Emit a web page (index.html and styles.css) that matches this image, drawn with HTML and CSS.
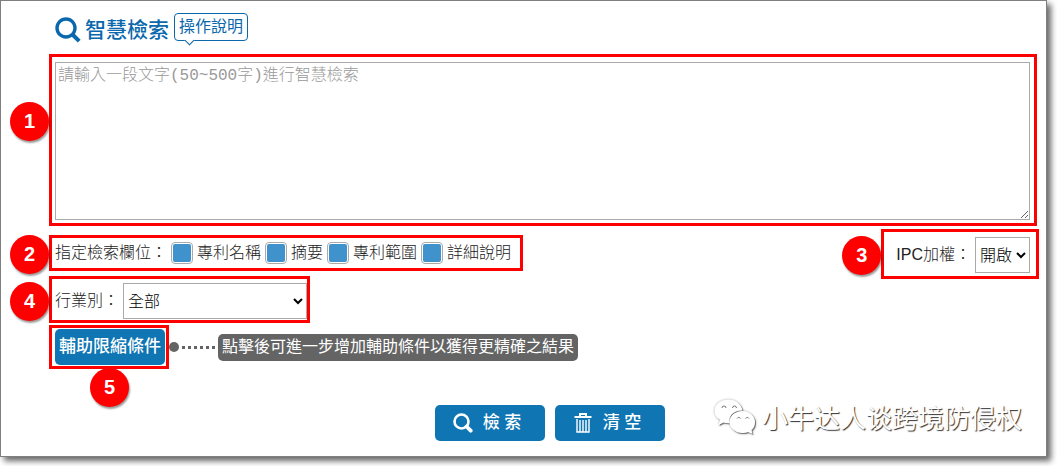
FILE: index.html
```html
<!DOCTYPE html>
<html lang="zh-Hant">
<head>
    <meta charset="UTF-8">
    <meta name="viewport" content="width=device-width, initial-scale=1.0">
    <title>智慧檢索</title>
    <link rel="stylesheet" href="styles.css">
</head>
<body>
    <form class="panel">
        <header class="header">
            <svg class="title-icon" viewBox="0 0 26 26" aria-hidden="true">
                <circle cx="11" cy="11" r="9" fill="none" stroke="currentColor" stroke-width="3.4"/>
                <path d="M17 17l7.2 7.2" stroke="currentColor" stroke-width="4"/>
            </svg>
            <h1 class="title" id="title">智慧檢索</h1>
            <a class="help" href="#help">操作說明</a>
        </header>

        <div class="mark mark-query">
            <textarea class="query" aria-labelledby="title" placeholder="請輸入一段文字(50~500字)進行智慧檢索"></textarea>
            <span class="badge badge-side">1</span>
        </div>

        <div class="options">
            <div class="options-left">
                <div class="mark mark-fields" role="group" aria-labelledby="fields-label">
                    <span class="fields-label" id="fields-label">指定檢索欄位：</span>
                    <label class="field"><input type="checkbox" class="check" checked>專利名稱</label>
                    <label class="field"><input type="checkbox" class="check" checked>摘要</label>
                    <label class="field"><input type="checkbox" class="check" checked>專利範圍</label>
                    <label class="field"><input type="checkbox" class="check" checked>詳細說明</label>
                    <span class="badge badge-side">2</span>
                </div>

                <div class="mark mark-industry">
                    <label for="industry">行業別：</label>
                    <select class="select select-wide" id="industry">
                        <option>全部</option>
                    </select>
                    <span class="badge badge-side">4</span>
                </div>

                <div class="limit-row">
                    <div class="mark mark-limit">
                        <button type="button" class="btn">輔助限縮條件</button>
                        <span class="badge badge-below">5</span>
                    </div>
                    <span class="dot"></span>
                    <span class="dots"></span>
                    <span class="hint">點擊後可進一步增加輔助條件以獲得更精確之結果</span>
                </div>
            </div>

            <div class="mark mark-ipc">
                <label for="ipc">IPC加權：</label>
                <select class="select" id="ipc">
                    <option>開啟</option>
                </select>
                <span class="badge badge-side">3</span>
            </div>
        </div>

        <div class="actions">
            <button type="submit" class="btn btn-action">
                <svg class="btn-icon" viewBox="0 0 20 20" aria-hidden="true">
                    <circle cx="8.5" cy="8.5" r="7" fill="none" stroke="currentColor" stroke-width="2.6"/>
                    <path d="M13.5 13.5l4.2 4.2" stroke="currentColor" stroke-width="3.8" stroke-linecap="round"/>
                </svg>
                檢 索
            </button>
            <button type="reset" class="btn btn-action">
                <svg class="btn-icon" viewBox="0 0 20 20" aria-hidden="true">
                    <path d="M7 3V1h6v2M1.500 4h17" fill="none" stroke="currentColor" stroke-width="2"/>
                    <path d="M4 6v13h12V6M7 7v12M10 7v12M13 7v12" fill="none" stroke="currentColor" stroke-width="1.4"/>
                </svg>
                清 空
            </button>
        </div>

        <div class="watermark">
            <svg class="watermark-icon" viewBox="0 0 42 36" aria-hidden="true">
                <path d="M14.500 0.500C6.500 0.500 0.500 5.500 0.500 12C0.500 16 2.500 19 6 21L4.500 26L9.500 23.500C11.500 24.200 13.500 24.500 16 24.200C13.500 17 20 11 28.500 11.500C27.500 5 21.500 0.500 14.500 0.500Z"/>
                <path d="M28.500 12C21 12 15.500 17 15.500 23C15.500 29 21 34 28.500 34C30.500 34 32.500 33.600 34 33L38.500 35L37.500 31C40 29 41 26.500 41 23C41 17 35.500 12 28.500 12Z"/>
                <g class="watermark-eye">
                    <path d="M8 9a2 2 0 0 1 4 0M18.500 9a2 2 0 0 1 4 0M23 19.500a2 2 0 0 1 3.500 0M31.500 19.500a2 2 0 0 1 3.500 0"/>
                </g>
            </svg>
            <span lang="zh-Hans">小牛达人谈跨境防侵权</span>
        </div>
    </form>
</body>
</html>
```

FILE: styles.css
```css
* {
    box-sizing: border-box;
}

body {
    margin: 0;
    padding: 0 10px 9px 0;
    background: #fff;
    font: 300 16px/24px "Liberation Sans", "Noto Sans CJK TC", sans-serif;
    color: #222;
}

.panel {
    position: relative;
    padding: 12px 7px 15px 48px;
    border: 1px solid #7f7f7f;
    background: #fff;
    box-shadow: 4px 4px 6px rgba(0, 0, 0, 0.6);
}

.header {
    display: flex;
    align-items: center;
    gap: 4px;
    height: 34px;
    margin: 0 0 7px 6px;
    color: #0a68ad;
}

.title-icon {
    width: 26px;
    height: 26px;
}

.title {
    margin: 0;
    font-size: 21px;
    font-weight: 500;
    line-height: 32px;
}

.help {
    position: relative;
    align-self: flex-start;
    height: 28px;
    margin-left: 1px;
    padding: 0 4px;
    border: 1px solid #0a68ad;
    border-radius: 4px;
    color: #0a68ad;
    font-weight: 400;
    line-height: 26px;
    text-decoration: none;
}

.help::after {
    content: '';
    position: absolute;
    left: 11px;
    bottom: -4px;
    width: 6px;
    height: 6px;
    border: solid #0a68ad;
    border-width: 0 1px 1px 0;
    background: #fff;
    transform: rotate(45deg);
}

/* red frames with numbered badges */
.mark {
    position: relative;
    display: flex;
    align-items: center;
    border: 3px solid #f00;
}

.badge {
    position: absolute;
    width: 39px;
    height: 39px;
    border-radius: 50%;
    background: #f00;
    box-shadow: 1px 2px 2px rgba(0, 0, 0, 0.4);
    color: #fff;
    font-size: 20px;
    font-weight: 700;
    line-height: 38px;
    text-align: center;
}

.badge-side {
    right: 100%;
    top: 50%;
    margin: -18px 3px 0 0;
}

.badge-below {
    top: 100%;
    left: 50%;
    margin: 2px 0 0 -19px;
}

.mark-query {
    margin-right: 2px;
    padding: 5px 4px 3px 3px;
}

.mark-query .badge {
    top: 45px;
    margin-top: 0;
}

.query {
    display: block;
    flex: 1;
    height: 158px;
    margin: 0;
    padding: 1px 2px;
    border: 1px solid #aaa;
    font: 300 16px/24px "Liberation Mono", "Noto Sans CJK TC", monospace;
    outline: none;
}

.query::placeholder {
    color: #999;
}

.options {
    display: flex;
    justify-content: space-between;
    align-items: flex-start;
}

.options-left {
    display: flex;
    flex-direction: column;
    align-items: flex-start;
    padding-top: 9px;
}

.mark-fields {
    gap: 4px;
    height: 36px;
    padding: 0 9px 0 3px;
}

.field {
    display: flex;
    align-items: center;
    gap: 4px;
}

.check {
    appearance: none;
    width: 22px;
    height: 22px;
    margin: 0;
    padding: 1px;
    border: 1px solid #aaa;
    border-radius: 4px;
}

.check:checked {
    background: #3f92cb content-box;
}

.mark-industry {
    gap: 4px;
    margin-top: 5px;
    padding: 4px 0 1px 3px;
}

.select {
    height: 36px;
    margin: 0;
    padding: 0;
    border: 1px solid #aaa;
    border-radius: 0;
    background: #fff;
    color: #000;
    font: inherit;
}

.select-wide {
    width: 184px;
}

.mark-ipc {
    gap: 4px;
    margin-top: 3px;
    padding: 5px 6px 3px 12px;
}

.limit-row {
    display: flex;
    align-items: center;
    margin-top: 2px;
}

.mark-limit {
    padding: 1px 1px 1px 3px;
}

.btn {
    display: flex;
    align-items: center;
    justify-content: center;
    gap: 10px;
    width: 110px;
    height: 36px;
    padding: 0;
    border: 0;
    border-radius: 5px;
    background: #0f75b3;
    color: #fff;
    font: 500 17px/24px "Liberation Sans", "Noto Sans CJK TC", sans-serif;
    white-space: nowrap;
    cursor: pointer;
}

.btn-action {
    padding-right: 6px;
}

.btn-icon {
    width: 20px;
    height: 20px;
}

.dot {
    width: 10px;
    height: 10px;
    border-radius: 50%;
    background: #646464;
}

.dots {
    width: 39px;
    height: 3px;
    background: repeating-linear-gradient(90deg, transparent 0 3px, #646464 3px 6px);
}

.hint {
    padding: 1px 4px 2px;
    border-radius: 5px;
    background: #646464;
    color: #fff;
    font-weight: 400;
}

.actions {
    display: flex;
    justify-content: center;
    gap: 10px;
    margin-top: 36px;
    padding-left: 12px;
}

.watermark {
    position: absolute;
    right: 24px;
    bottom: 20px;
    display: flex;
    align-items: center;
    gap: 6px;
    color: #fff;
    font-family: "Noto Sans CJK SC", sans-serif;
    font-size: 26px;
    font-weight: 400;
    line-height: 38px;
    text-shadow: 1px 1px 1px #333;
}

.watermark-icon {
    width: 42px;
    height: 36px;
    fill: #fff;
    filter: drop-shadow(1px 1px 0 #777) drop-shadow(0 0 1px #aaa);
}

.watermark-eye {
    fill: none;
    stroke: #777;
}
```
